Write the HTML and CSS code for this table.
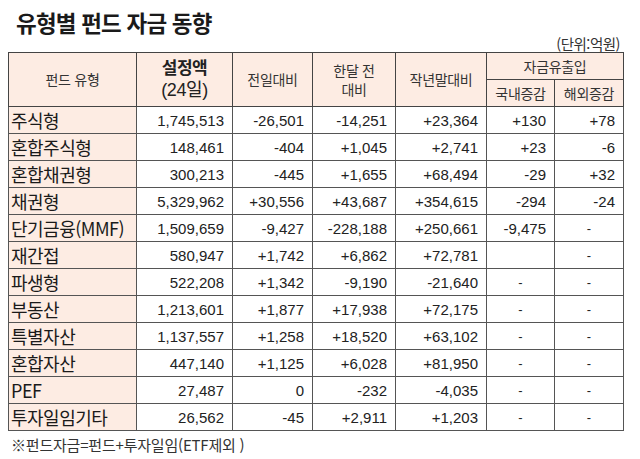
FILE: index.html
```html
<!DOCTYPE html>
<html lang="ko">
<head>
<meta charset="utf-8">
<link rel="stylesheet" href="styles.css">
</head>
<body>
<div class="page">
  <h1 class="title">유형별 펀드 자금 동향</h1>
  <div class="unit">(단위:억원)</div>
  <table class="grid">
    <colgroup>
      <col class="c1"><col class="c2"><col class="c3"><col class="c4"><col class="c5"><col class="c6"><col class="c7">
    </colgroup>
    <thead>
      <tr class="h1">
        <th rowspan="2">펀드 유형</th>
        <th rowspan="2" class="big"><b>설정액</b><span class="sub">(24일)</span></th>
        <th rowspan="2">전일대비</th>
        <th rowspan="2">한달 전<br>대비</th>
        <th rowspan="2">작년말대비</th>
        <th colspan="2">자금유출입</th>
      </tr>
      <tr class="h2">
        <th>국내증감</th>
        <th>해외증감</th>
      </tr>
    </thead>
    <tbody>
      <tr><td class="name">주식형</td><td>1,745,513</td><td>-26,501</td><td>-14,251</td><td>+23,364</td><td>+130</td><td>+78</td></tr>
      <tr><td class="name">혼합주식형</td><td>148,461</td><td>-404</td><td>+1,045</td><td>+2,741</td><td>+23</td><td>-6</td></tr>
      <tr><td class="name">혼합채권형</td><td>300,213</td><td>-445</td><td>+1,655</td><td>+68,494</td><td>-29</td><td>+32</td></tr>
      <tr><td class="name">채권형</td><td>5,329,962</td><td>+30,556</td><td>+43,687</td><td>+354,615</td><td>-294</td><td>-24</td></tr>
      <tr><td class="name">단기금융(MMF)</td><td>1,509,659</td><td>-9,427</td><td>-228,188</td><td>+250,661</td><td>-9,475</td><td class="dash">-</td></tr>
      <tr><td class="name">재간접</td><td>580,947</td><td>+1,742</td><td>+6,862</td><td>+72,781</td><td class="dash"></td><td class="dash">-</td></tr>
      <tr><td class="name">파생형</td><td>522,208</td><td>+1,342</td><td>-9,190</td><td>-21,640</td><td class="dash">-</td><td class="dash">-</td></tr>
      <tr><td class="name">부동산</td><td>1,213,601</td><td>+1,877</td><td>+17,938</td><td>+72,175</td><td class="dash">-</td><td class="dash">-</td></tr>
      <tr><td class="name">특별자산</td><td>1,137,557</td><td>+1,258</td><td>+18,520</td><td>+63,102</td><td class="dash">-</td><td class="dash">-</td></tr>
      <tr><td class="name">혼합자산</td><td>447,140</td><td>+1,125</td><td>+6,028</td><td>+81,950</td><td class="dash">-</td><td class="dash">-</td></tr>
      <tr><td class="name">PEF</td><td>27,487</td><td>0</td><td>-232</td><td>-4,035</td><td class="dash">-</td><td class="dash">-</td></tr>
      <tr><td class="name">투자일임기타</td><td>26,562</td><td>-45</td><td>+2,911</td><td>+1,203</td><td class="dash">-</td><td class="dash">-</td></tr>
    </tbody>
  </table>
  <p class="note">※펀드자금=펀드+투자일임(ETF제외 )</p>
</div>
</body>
</html>
```

FILE: styles.css
```css
* { box-sizing: border-box; }
html, body { margin: 0; padding: 0; background: #fff; }
body {
  font-family: "Liberation Sans", "Noto Sans CJK KR", sans-serif;
  color: #222;
}
.page {
  width: 640px;
  height: 459px;
  padding: 8px 17px 0 8px;
}
.title {
  margin: 0 0 0 8px;
  font-family: "Noto Sans CJK KR", sans-serif;
  font-size: 22.5px;
  font-weight: 700;
  line-height: 28px;
  letter-spacing: -0.8px;
  color: #1a1a1a;
}
.unit {
  text-align: right;
  font-family: "Noto Sans CJK KR", sans-serif;
  font-size: 14.5px;
  line-height: 16px;
  height: 16px;
  margin-right: 3px;
  color: #333;
  letter-spacing: -0.5px;
}
.grid {
  border-collapse: collapse;
  width: 615px;
  table-layout: fixed;
  border: 1px solid #333;
}
.c1 { width: 128px; }
.c2 { width: 96px; }
.c3 { width: 80px; }
.c4 { width: 83px; }
.c5 { width: 91px; }
.c6 { width: 68px; }
.c7 { width: 69px; }
.grid th {
  background: #fdece3;
  font-family: "Noto Sans CJK KR", sans-serif;
  font-weight: 400;
  font-size: 14px;
  line-height: 19px;
  color: #333;
  border: 1px solid #444;
  padding: 0;
  letter-spacing: -0.3px;
}
.h1 th { height: 27px; }
.h2 th { height: 27px; }
.grid th.big {
  font-family: "Liberation Sans", "Noto Sans CJK KR", sans-serif;
  font-size: 17px;
  line-height: 21px;
  color: #222;
  letter-spacing: -0.5px;
}
.grid th.big b {
  display: block;
  font-weight: 700;
  font-size: 17px;
  line-height: 20px;
}
.grid th.big .sub {
  display: block;
  font-size: 18px;
  line-height: 22px;
  letter-spacing: -0.4px;
}
.grid td {
  height: 27px;
  border: 1px solid #555;
  padding: 0 8px 0 0;
  text-align: right;
  font-family: "Liberation Sans", sans-serif;
  font-size: 15px;
  color: #222;
  white-space: nowrap;
}
.grid td.name {
  background: #fdece3;
  text-align: left;
  padding: 0 0 0 2px;
  font-family: "Noto Sans CJK KR", sans-serif;
  font-size: 18px;
  letter-spacing: -0.5px;
  color: #1a1a1a;
}
.grid td.dash {
  text-align: center;
  padding: 0;
  font-size: 13px;
}
.note {
  margin: 5px 0 0 3px;
  font-family: "Noto Sans CJK KR", sans-serif;
  font-size: 15px;
  line-height: 18px;
  color: #333;
  letter-spacing: -0.2px;
}
```
